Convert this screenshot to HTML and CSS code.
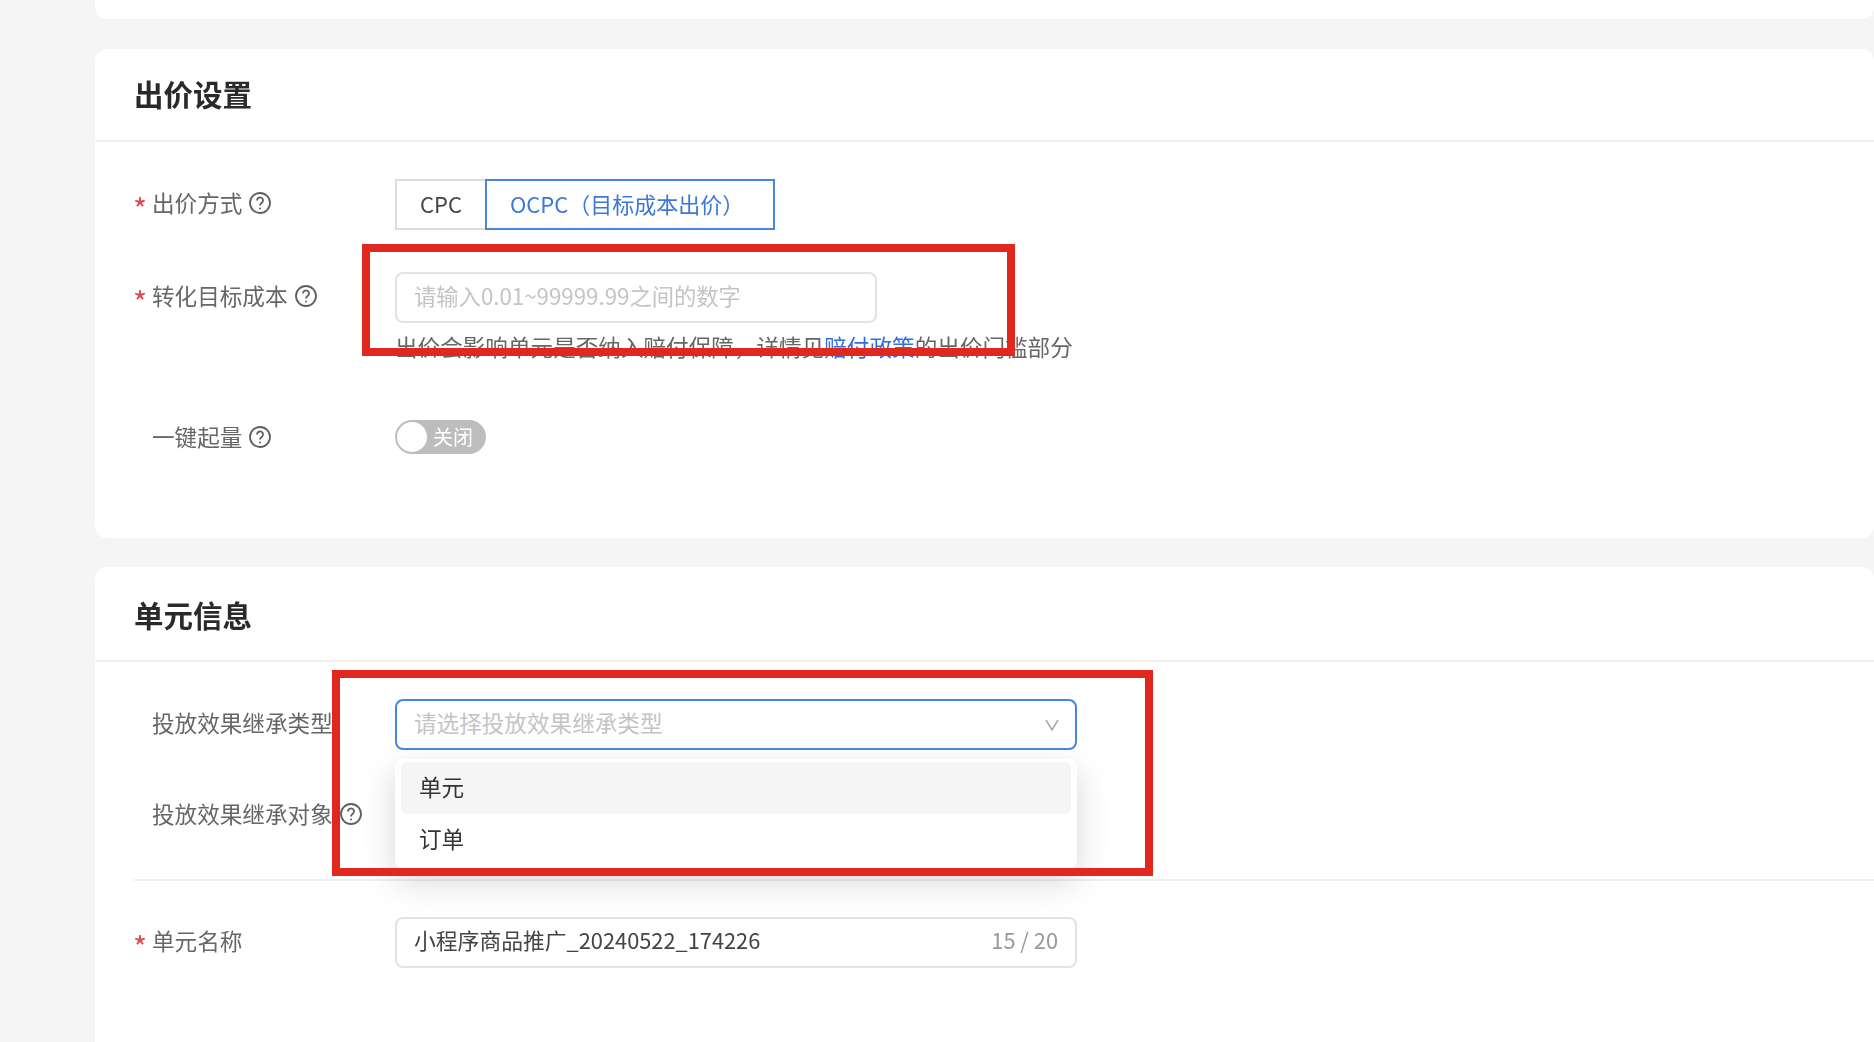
FILE: index.html
```html
<!DOCTYPE html>
<html lang="zh-CN">
<head>
<meta charset="utf-8">
<title>出价设置</title>
<link rel="stylesheet" href="styles.css">
</head>
<body>
<main class="page">
  <div class="card card-stub"></div>

  <section class="card card-bid">
    <h2 class="card-title">出价设置</h2>
    <div class="card-body">
      <div class="row row-method">
        <div class="label"><span class="star">*</span>出价方式<svg class="help" viewBox="0 0 24 24"><circle cx="12" cy="12" r="10"/><path d="M9 9.5a3 3 0 1 1 4.6 2.5c-1 .7-1.6 1.2-1.6 2.5"/><circle class="dot" cx="12" cy="17.4" r="1"/></svg></div>
        <div class="segment">
          <span class="seg-item">CPC</span>
          <span class="seg-item seg-active">OCPC（目标成本出价）</span>
        </div>
      </div>

      <div class="row row-cost">
        <div class="label"><span class="star">*</span>转化目标成本<svg class="help" viewBox="0 0 24 24"><circle cx="12" cy="12" r="10"/><path d="M9 9.5a3 3 0 1 1 4.6 2.5c-1 .7-1.6 1.2-1.6 2.5"/><circle class="dot" cx="12" cy="17.4" r="1"/></svg></div>
        <div class="field">
          <div class="input input-cost placeholder">请输入0.01~99999.99之间的数字</div>
          <p class="hint">出价会影响单元是否纳入赔付保障，详情见<a class="link">赔付政策</a>的出价门槛部分</p>
          <div class="redbox redbox-cost"></div>
        </div>
      </div>

      <div class="row row-toggle">
        <div class="label">一键起量<svg class="help" viewBox="0 0 24 24"><circle cx="12" cy="12" r="10"/><path d="M9 9.5a3 3 0 1 1 4.6 2.5c-1 .7-1.6 1.2-1.6 2.5"/><circle class="dot" cx="12" cy="17.4" r="1"/></svg></div>
        <div class="toggle"><span class="knob"></span><span class="toggle-text">关闭</span></div>
      </div>
    </div>
  </section>

  <section class="card card-unit">
    <h2 class="card-title">单元信息</h2>
    <div class="card-body">
      <div class="row row-inherit">
        <div class="label">投放效果继承类型</div>
        <div class="field field-wide">
          <div class="input select placeholder">请选择投放效果继承类型
            <svg class="chevron" viewBox="0 0 18 18"><path d="M3 4l6 10 6-10"/></svg>
          </div>
          <div class="dropdown">
            <div class="option option-hover">单元</div>
            <div class="option">订单</div>
          </div>
          <div class="redbox redbox-select"></div>
        </div>
      </div>

      <div class="row row-target">
        <div class="label">投放效果继承对象<svg class="help" viewBox="0 0 24 24"><circle cx="12" cy="12" r="10"/><path d="M9 9.5a3 3 0 1 1 4.6 2.5c-1 .7-1.6 1.2-1.6 2.5"/><circle class="dot" cx="12" cy="17.4" r="1"/></svg></div>
      </div>

      <hr class="divider">

      <div class="row row-name">
        <div class="label"><span class="star">*</span>单元名称</div>
        <div class="input input-name">
          <span>小程序商品推广_20240522_174226</span>
          <span class="count">15 / 20</span>
        </div>
      </div>
    </div>
  </section>
</main>
</body>
</html>
```

FILE: styles.css
```css
* { box-sizing: border-box; }

html, body {
  margin: 0;
  height: 100%;
  overflow: hidden;
}

body {
  background: #f5f5f5;
  color: #333;
  font-family: "Noto Sans CJK SC", "Noto Sans", sans-serif;
  font-size: 22.6px;
}

.page {
  padding-left: 95px;
  filter: blur(0.5px);
}

.card {
  background: #fff;
  border-radius: 12px;
}

.card-stub {
  height: 19px;
  border-radius: 0 0 12px 12px;
  margin-bottom: 30px;
}

.card-bid {
  height: 489px;
  margin-bottom: 29px;
}

.card-unit {
  height: 520px;
}

.card-title {
  height: 93px;
  margin: 0;
  padding-left: 39px;
  font-size: 29.5px;
  font-weight: 700;
  line-height: 88px;
  color: #2a2a2a;
  border-bottom: 2px solid #f0f0f0;
}

.card-unit .card-title {
  height: 95px;
  line-height: 94px;
}

.card-body { padding-top: 37px; }

.row {
  display: flex;
  align-items: flex-start;
}

.label {
  flex: none;
  display: flex;
  align-items: center;
  width: 300px;
  height: 47px;
  padding-left: 57px;
  position: relative;
  color: #666;
  white-space: nowrap;
}

.star {
  position: absolute;
  left: 38px;
  top: 11px;
  color: #e5484d;
  font-size: 30px;
  line-height: 36px;
}

.help {
  flex: none;
  width: 24px;
  height: 24px;
  margin-left: 6px;
  fill: none;
  stroke: #5f5f5f;
  stroke-width: 1.8;
}

.help .dot {
  fill: #5f5f5f;
  stroke: none;
}

.segment {
  display: flex;
  height: 51px;
  font-size: 22px;
}

.seg-item {
  display: flex;
  align-items: center;
  padding: 0 23px 4px;
  border: 2px solid #dcdcdc;
  border-right: 0;
  line-height: 1;
  color: #444;
}

.seg-active {
  padding-right: 29px;
  border: 2px solid #4a86d8;
  color: #3c78d8;
}

.row-cost { margin-top: 42px; }

.field {
  position: relative;
  width: 682px;
}

.input {
  display: flex;
  align-items: center;
  justify-content: space-between;
  height: 51px;
  padding: 0 17px 6px;
  background: #fff;
  border: 2px solid #e2e2e2;
  border-radius: 8px;
  white-space: nowrap;
}

.input-cost {
  width: 482px;
  font-size: 22.3px;
}

.placeholder { color: #c4c4c4; }

.hint {
  margin: 8px 0 0;
  line-height: 32px;
  color: #666;
  white-space: nowrap;
}

.link { color: #2f6fdb; }

.redbox {
  position: absolute;
  border: 8px solid #e0281f;
  pointer-events: none;
}

.redbox-cost {
  left: -33px;
  top: -28px;
  width: 653px;
  height: 112px;
}

.redbox-select {
  z-index: 3;
  left: -63px;
  top: -29px;
  width: 821px;
  height: 206px;
}

.row-toggle {
  align-items: center;
  margin-top: 50px;
}

.toggle {
  display: flex;
  align-items: center;
  width: 91px;
  height: 34px;
  padding: 2px;
  background: #bdbdbd;
  border-radius: 17px;
  color: #fff;
  font-size: 20px;
  line-height: 1;
}

.knob {
  flex: none;
  width: 30px;
  height: 30px;
  margin-right: 6px;
  background: #fff;
  border-radius: 50%;
}

.select {
  padding: 0 14px 4px 17px;
  border-color: #4a86d8;
}

.chevron {
  flex: none;
  width: 18px;
  height: 18px;
  margin-top: 4px;
  fill: none;
  stroke: #aaa;
  stroke-width: 1.6;
}

.dropdown {
  position: absolute;
  z-index: 2;
  top: 60px;
  left: 0;
  width: 100%;
  padding: 3px 6px;
  background: #fff;
  border-radius: 8px;
  color: #333;
  box-shadow: 0 12px 34px rgba(0, 0, 0, 0.16);
}

.option {
  display: flex;
  align-items: center;
  height: 52px;
  padding: 0 18px 3px;
  border-radius: 6px;
}

.option-hover { background: #f5f5f5; }

.row-target { margin-top: 40px; }

.divider {
  height: 2px;
  margin: 42px 0 0 39px;
  border: 0;
  background: #f0f0f0;
}

.row-name { margin-top: 36px; }

.input-name {
  width: 682px;
  color: #444;
  font-size: 21.8px;
}

.count { color: #999; }
```
